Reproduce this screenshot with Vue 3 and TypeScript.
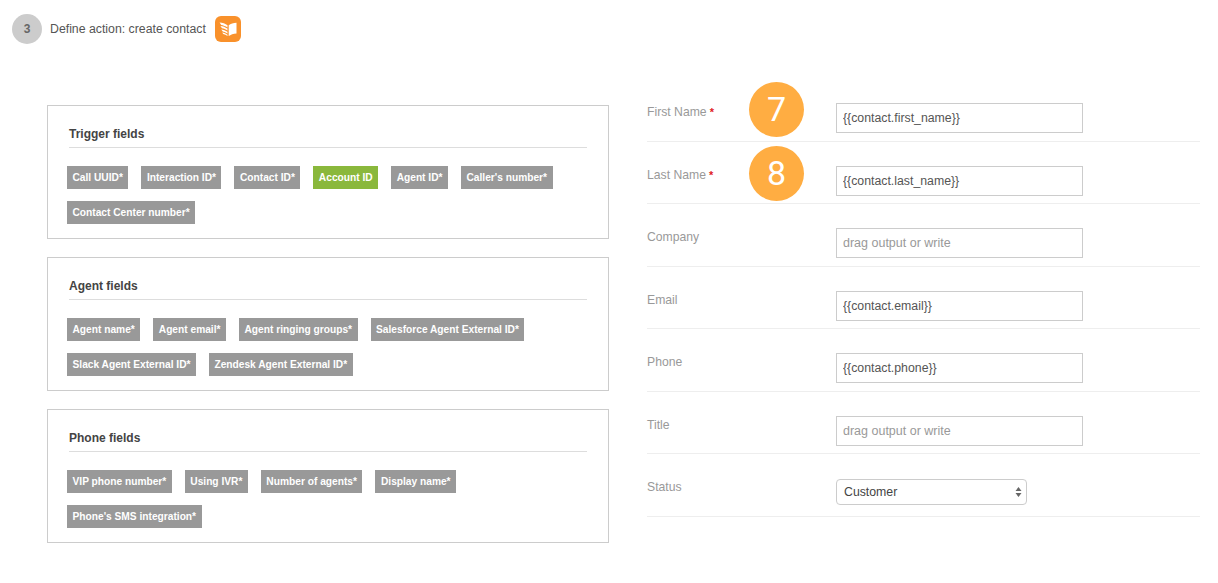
<script setup lang="ts">
interface Tag { label: string; green?: boolean }
interface Card { title: string; tags: Tag[] }
interface Row { label: string; required?: boolean; value?: string; badge?: string }

const cards: Card[] = [
  { title: 'Trigger fields', tags: [
    { label: 'Call UUID*' }, { label: 'Interaction ID*' }, { label: 'Contact ID*' },
    { label: 'Account ID', green: true }, { label: 'Agent ID*' }, { label: "Caller's number*" },
    { label: 'Contact Center number*' } ] },
  { title: 'Agent fields', tags: [
    { label: 'Agent name*' }, { label: 'Agent email*' }, { label: 'Agent ringing groups*' },
    { label: 'Salesforce Agent External ID*' }, { label: 'Slack Agent External ID*' },
    { label: 'Zendesk Agent External ID*' } ] },
  { title: 'Phone fields', tags: [
    { label: 'VIP phone number*' }, { label: 'Using IVR*' }, { label: 'Number of agents*' },
    { label: 'Display name*' }, { label: "Phone's SMS integration*" } ] },
]

const rows: Row[] = [
  { label: 'First Name', required: true, value: '{{contact.first_name}}', badge: '7' },
  { label: 'Last Name', required: true, value: '{{contact.last_name}}', badge: '8' },
  { label: 'Company' },
  { label: 'Email', value: '{{contact.email}}' },
  { label: 'Phone', value: '{{contact.phone}}' },
  { label: 'Title' },
]
</script>

<template>
  <div class="page">
    <header class="head">
      <span class="step">3</span>
      <span class="head-title">Define action: create contact</span>
      <span class="book">
        <svg width="18" height="16" viewBox="0 0 18 16">
          <path d="M9.7 4.2 C11.5 3 14.5 2 17.5 1.8 V12.4 C14.5 12.6 11.5 13.6 9.7 15 Z" fill="#fff" />
          <path d="M0.6 1.6 C3.6 1.8 6.4 2.8 8.5 4.2 V6.4 C6.6 5.1 4.2 4.2 2.2 3.9 Z M1.4 5 C3.8 5.2 6.4 6.2 8.5 7.6 V9.6 C6.8 8.4 5 7.7 3 7.3 Z M2.2 8.4 C4.4 8.6 6.6 9.6 8.5 10.8 V12.6 C7 11.6 5.4 10.9 3.8 10.6 Z M3.2 11.5 C5.2 11.8 7 12.6 8.5 13.7 V15 C7.2 14.1 5.8 13.4 4.2 13.1 Z" fill="#fff" />
        </svg>
      </span>
    </header>

    <main class="main">
      <section class="cards">
        <div v-for="card in cards" :key="card.title" class="card">
          <h3 class="card-title">{{ card.title }}</h3>
          <div class="tags">
            <span v-for="tag in card.tags" :key="tag.label" class="tag" :class="{ green: tag.green }">{{ tag.label }}</span>
          </div>
        </div>
      </section>

      <form class="form" @submit.prevent>
        <div v-for="row in rows" :key="row.label" class="row">
          <label class="label">{{ row.label }}<span v-if="row.required" class="req"> *</span></label>
          <input class="input" type="text" :value="row.value ?? ''" placeholder="drag output or write" />
          <span v-if="row.badge" class="badge">{{ row.badge }}</span>
        </div>
        <div class="row">
          <label class="label">Status</label>
          <div class="select-wrap">
            <select class="select"><option>Customer</option></select>
            <svg class="arrows" width="7" height="12" viewBox="0 0 7 12">
              <path d="M3.5 1 L6.5 5 H0.5 Z M0.5 7 H6.5 L3.5 11 Z" fill="#666" />
            </svg>
          </div>
        </div>
      </form>
    </main>
  </div>
</template>

<style>
html, body { margin: 0; background: #fff; }
</style>

<style scoped>
.page {
  width: 1218px;
  height: 583px;
  overflow: hidden;
  font-family: "Liberation Sans", Arial, sans-serif;
  box-sizing: border-box;
  padding: 14px 18px 0 12px;
}
.head { display: flex; align-items: center; height: 30px; }
.step {
  width: 30px; height: 30px; border-radius: 50%;
  background: #ccc; color: #666;
  font-size: 12px; font-weight: 700;
  display: flex; align-items: center; justify-content: center;
}
.head-title { margin-left: 8px; font-size: 12.3px; color: #555; }
.book {
  margin-left: 9px; width: 26px; height: 26px; border-radius: 6px;
  background: #f9912b;
  display: flex; align-items: center; justify-content: center;
}
.main { display: flex; margin-top: 47px; padding-left: 35px; }
.cards { width: 562px; margin-top: 14px; display: flex; flex-direction: column; gap: 18px; }
.card {
  box-sizing: border-box; height: 134px;
  border: 1px solid #ccc;
  padding: 21px 21px 0 21px;
}
.card-title {
  margin: 0; height: 20px;
  font-size: 12px; line-height: 15px; font-weight: 700; color: #444;
  border-bottom: 1px solid #ddd;
}
.tags { display: flex; flex-wrap: wrap; gap: 12px 13px; margin: 18px 0 0 -2px; }
.tag {
  height: 23px; line-height: 23px; padding: 0 5.5px;
  background: #999; color: #fff;
  font-size: 10.2px; font-weight: 700; white-space: nowrap;
}
.tag.green { background: #8ab83c; }
.form { width: 553px; margin-left: 38px; }
.row {
  position: relative; box-sizing: border-box; height: 62.5px;
  border-bottom: 1px solid #eee;
  display: flex; align-items: flex-start;
}
.row:first-child { height: 50.5px; }
.label {
  width: 189px; flex: none; margin-top: 26px;
  font-size: 12.2px; line-height: 15px; color: #999;
}
.row:first-child .label { margin-top: 14px; }
.row:first-child .input { margin-top: 12px; }
.req { color: #e01b24; font-weight: 700; font-size: 11px; }
.input {
  box-sizing: border-box; width: 247px; height: 30px; margin-top: 24px;
  border: 1px solid #ccc; border-radius: 0; outline: none;
  padding: 0 6px; font: 12.3px "Liberation Sans", Arial, sans-serif; color: #555;
  background: #fff;
}
.input::placeholder { color: #999; opacity: 1; font-size: 12.5px; }
.badge {
  position: absolute; left: 102px; top: 4px;
  width: 55px; height: 55px; border-radius: 50%;
  background: #ffad42; color: #fff;
  font: 400 34px/55px Roboto, sans-serif; text-align: center;
}
.row:first-child .badge { top: -9px; }
.select-wrap { position: relative; margin-top: 25px; width: 191px; height: 26px; }
.select {
  appearance: none; box-sizing: border-box; width: 100%; height: 100%;
  border: 1px solid #ccc; border-radius: 4px; background: #fff;
  padding: 0 7px; font: 12.3px "Liberation Sans", Arial, sans-serif; color: #444; outline: none;
}
.arrows { position: absolute; right: 5px; top: 7px; pointer-events: none; }
</style>
